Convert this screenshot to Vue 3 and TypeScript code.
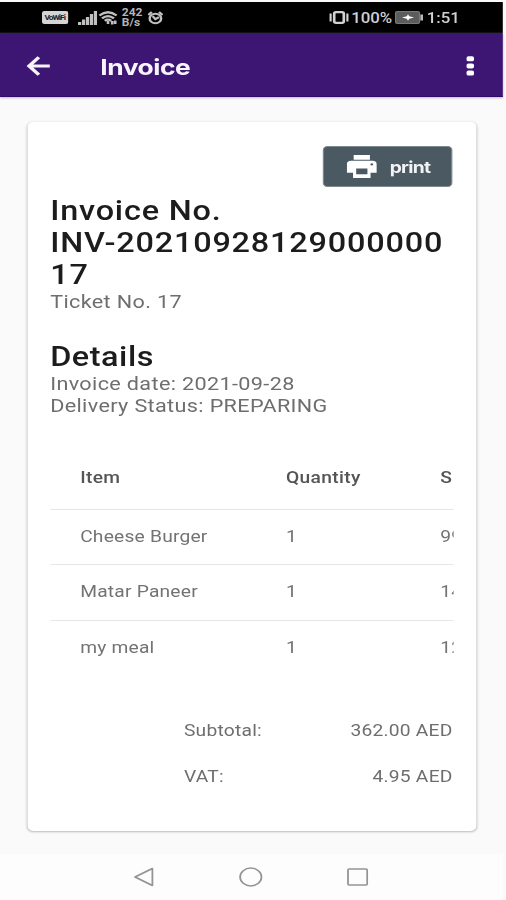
<script setup lang="ts">
interface LineItem {
  name: string
  quantity: number
  price: string
}

interface Total {
  label: string
  amount: string
}

const items: LineItem[] = [
  { name: 'Cheese Burger', quantity: 1, price: '99' },
  { name: 'Matar Paneer', quantity: 1, price: '14' },
  { name: 'my meal', quantity: 1, price: '12' },
]

const totals: Total[] = [
  { label: 'Subtotal:', amount: '362.00 AED' },
  { label: 'VAT:', amount: '4.95 AED' },
]
</script>

<template>
  <div class="screen">
    <header class="status">
      <div class="status-left">
        <svg class="vowifi" viewBox="0 0 22 13" width="22" height="13">
          <rect width="22" height="13" rx="2" fill="#d4d4d4" />
          <text x="2" y="9" font-size="7" font-weight="700" textLength="18" fill="#222">VoWiFi</text>
        </svg>
        <svg class="signal" viewBox="0 0 16 14" width="16" height="14" fill="#c0c0c0">
          <path d="M0 11h2.700v3H0zM3.300 8.500h2.700V14H3.300zM6.600 6h2.700v8H6.600zM9.900 3h2.700v11H9.900zM13.200 0h2.700v14h-2.700z" />
        </svg>
        <svg class="wifi" viewBox="0 0 16 14" width="16" height="14" fill="none" stroke="#c0c0c0" stroke-width="2.2">
          <path d="M.8 4.500Q8-2 15.200 4.500M3 7.300q5-4.400 10 0M5.300 9.800q2.700-2.200 5.400 0" />
          <path d="M8 10v3M11.500 10v3.500M14 9.500V13" />
        </svg>
        <div class="speed"><span>242</span><span>B/s</span></div>
        <svg class="alarm" viewBox="0 0 13 14" width="13" height="14" fill="none" stroke="#c0c0c0" stroke-width="2">
          <circle cx="6.500" cy="7.500" r="4.800" />
          <path d="M.6 4 3.500 1M12.400 4 9.500 1M4.200 5.200l2.300 3 3-2" />
        </svg>
      </div>
      <div class="status-right">
        <svg viewBox="0 0 17 13" width="17" height="13" fill="none" stroke="#d2d2d2" stroke-width="2.200">
          <rect x="4.500" y="1.200" width="8" height="10.600" rx="1.500" />
          <path d="M1.500 2.500v8M15.500 2.500v8" stroke-width="1.800" />
        </svg>
        <span class="percent">100%</span>
        <svg class="battery" viewBox="0 0 24 13" width="24" height="13">
          <rect x=".6" y=".6" width="20" height="11.800" rx="1.500" fill="#5c5c5c" stroke="#7a7a7a" />
          <path d="M21.300 3.500h2.200v6h-2.200z" fill="#bbb" />
          <path d="m6 6.500 4-1.200 1-2 1 2 4 1.200-4 1.200-1 2-1-2z" fill="#fff" />
        </svg>
        <span class="clock">1:51</span>
      </div>
    </header>

    <nav class="appbar">
      <svg class="back" viewBox="0 0 20 20" width="20" height="20" fill="none" stroke="#f5f2fa" stroke-width="3.100">
        <path d="M19.500 10H2M10.400 1.200 2.200 10l8.200 8.800" />
      </svg>
      <h1>Invoice</h1>
      <svg class="more" viewBox="0 0 8 20" width="8" height="20" fill="#fff">
        <rect x=".8" y=".3" width="6.200" height="5" rx="1.600" />
        <rect x=".8" y="7.400" width="6.200" height="5" rx="1.600" />
        <rect x=".8" y="14.500" width="6.200" height="5" rx="1.600" />
      </svg>
    </nav>

    <main class="content">
      <section class="card">
        <button class="print" type="button">
          <svg viewBox="0 0 24 22" width="25" height="23">
            <path d="M5.500 0h13v4.500h-13z" fill="#fff" />
            <path d="M3.500 5.500h17A3.500 3.500 0 0 1 24 9v8h-5v5H5v-5H0V9a3.500 3.500 0 0 1 3.500-3.500z" fill="#fff" />
            <path d="M7.500 13h9v5.500h-9z" fill="#4b5963" />
            <circle cx="20" cy="9" r="1.100" fill="#4b5963" />
          </svg>
          <span>print</span>
        </button>

        <h2>Invoice No.<br />INV-20210928129000000<br />17</h2>
        <p>Ticket No. 17</p>

        <h2 class="details">Details</h2>
        <p>Invoice date: 2021-09-28</p>
        <p>Delivery Status: PREPARING</p>

        <div class="table">
          <div class="row head">
            <span>Item</span><span>Quantity</span><span>S</span>
          </div>
          <div v-for="item in items" :key="item.name" class="row">
            <span>{{ item.name }}</span><span>{{ item.quantity }}</span><span>{{ item.price }}</span>
          </div>
        </div>

        <div class="totals">
          <div v-for="total in totals" :key="total.label" class="total">
            <span>{{ total.label }}</span><span>{{ total.amount }}</span>
          </div>
        </div>
      </section>
    </main>

    <footer class="softkeys">
      <svg viewBox="0 0 18 20" width="18" height="20"><path d="M16 1.500v17L1.500 10z" /></svg>
      <svg viewBox="0 0 20 20" width="20" height="20"><circle cx="10" cy="10" r="8.900" /></svg>
      <svg viewBox="0 0 18 18" width="18" height="18"><rect x="1" y="1" width="16" height="16" rx="1" /></svg>
    </footer>
  </div>
</template>

<style>
body {
  margin: 0;
  background: #fafafa;
  overflow: hidden;
}
</style>

<style scoped>
.screen {
  box-sizing: border-box;
  width: 419.200px;
  height: 900px;
  padding-top: 2px;
  display: flex;
  flex-direction: column;
  background: #fafafa;
  transform: scaleX(1.2);
  transform-origin: 0 0;
  font-family: Roboto, 'Liberation Sans', sans-serif;
  color: #6e6e6e;
}

svg {
  display: block;
  flex: none;
}

.status {
  height: 31px;
  background: #000;
  display: flex;
  justify-content: space-between;
  align-items: center;
  padding: 0 36px 0 34.500px;
  color: #d0d0d0;
}

.status-left,
.status-right {
  display: flex;
  align-items: center;
}

.signal {
  margin-left: 8px;
}

.wifi {
  margin-left: 1px;
}

.speed {
  width: 17px;
  margin-left: 4px;
  display: flex;
  flex-direction: column;
  font-size: 10px;
  line-height: 10px;
  font-weight: 700;
  color: #b4b4b4;
}

.alarm {
  margin-left: 4px;
}

.percent {
  margin-left: 2px;
  width: 33px;
  font-size: 14px;
  font-weight: 500;
}

.battery {
  margin-left: 3px;
}

.clock {
  margin-left: 3px;
  font-size: 14px;
  font-weight: 500;
}

.appbar {
  height: 64px;
  background: #3d1673;
  border-bottom: 1px solid #33096e;
  display: flex;
  align-items: center;
  padding: 3px 23px 0 22px;
  box-sizing: border-box;
  box-shadow: 0 1px 2px #bdb8c6;
}

h1 {
  margin: 1px auto 0 41.500px;
  font-family: Inter, sans-serif;
  font-size: 22px;
  letter-spacing: -0.400px;
  font-weight: 700;
  color: #f7f4fb;
}

.content {
  padding: 25px 22.500px 0 23.300px;
}

.card {
  box-sizing: border-box;
  height: 709px;
  padding: 24px 19.500px 0 18.500px;
  background: #fff;
  border-radius: 5px;
  box-shadow: 0 1px 2px #bcbcbc, 0 0 3px #ececec;
}

.print {
  width: 108px;
  height: 41px;
  margin: 0 0 8px auto;
  padding: 0 0 0 19px;
  border: 1px solid #7d878e;
  border-radius: 4px;
  background: #4b5963;
  color: #f1f3f4;
  display: flex;
  align-items: center;
  gap: 10.500px;
  font-family: Inter, sans-serif;
  font-size: 16px;
  letter-spacing: -0.600px;
  font-weight: 700;
}

h2 {
  margin: 0;
  font-size: 27px;
  line-height: 32px;
  font-weight: 500;
  letter-spacing: 0.680px;
  color: #1c1c1c;
  white-space: nowrap;
}

.details {
  margin-top: 28px;
  letter-spacing: 0.450px;
}

p {
  margin: 0;
  font-size: 18px;
  line-height: 22px;
  letter-spacing: 0.300px;
  white-space: nowrap;
}

.table {
  margin: 28px -1.200px 0 0;
  overflow: hidden;
}

.row {
  box-sizing: border-box;
  height: 55.300px;
  padding: 0 0 1px 25px;
  border-bottom: 1px solid #e6e6e6;
  display: grid;
  grid-template-columns: 171.500px 128.500px 40px;
  align-items: center;
  font-size: 16px;
  letter-spacing: 0.180px;
  color: #737373;
}

.head {
  height: 65px;
  padding-bottom: 0;
  font-weight: 500;
  letter-spacing: 0.300px;
  color: #555;
}

.row:last-child {
  border-bottom: 0;
  padding-bottom: 2px;
}

.totals {
  margin: 32px 0 0 111.500px;
}

.total {
  height: 46px;
  display: flex;
  align-items: center;
  justify-content: space-between;
  font-size: 16px;
  letter-spacing: 0.200px;
}

.softkeys {
  flex: 1;
  margin-top: 23px;
  background: #fdfdfd;
  display: flex;
  align-items: center;
  gap: 70px;
  padding-left: 111px;
}

.softkeys svg {
  fill: none;
  stroke: #949494;
  stroke-width: 1.500;
  stroke-linejoin: round;
}
</style>
